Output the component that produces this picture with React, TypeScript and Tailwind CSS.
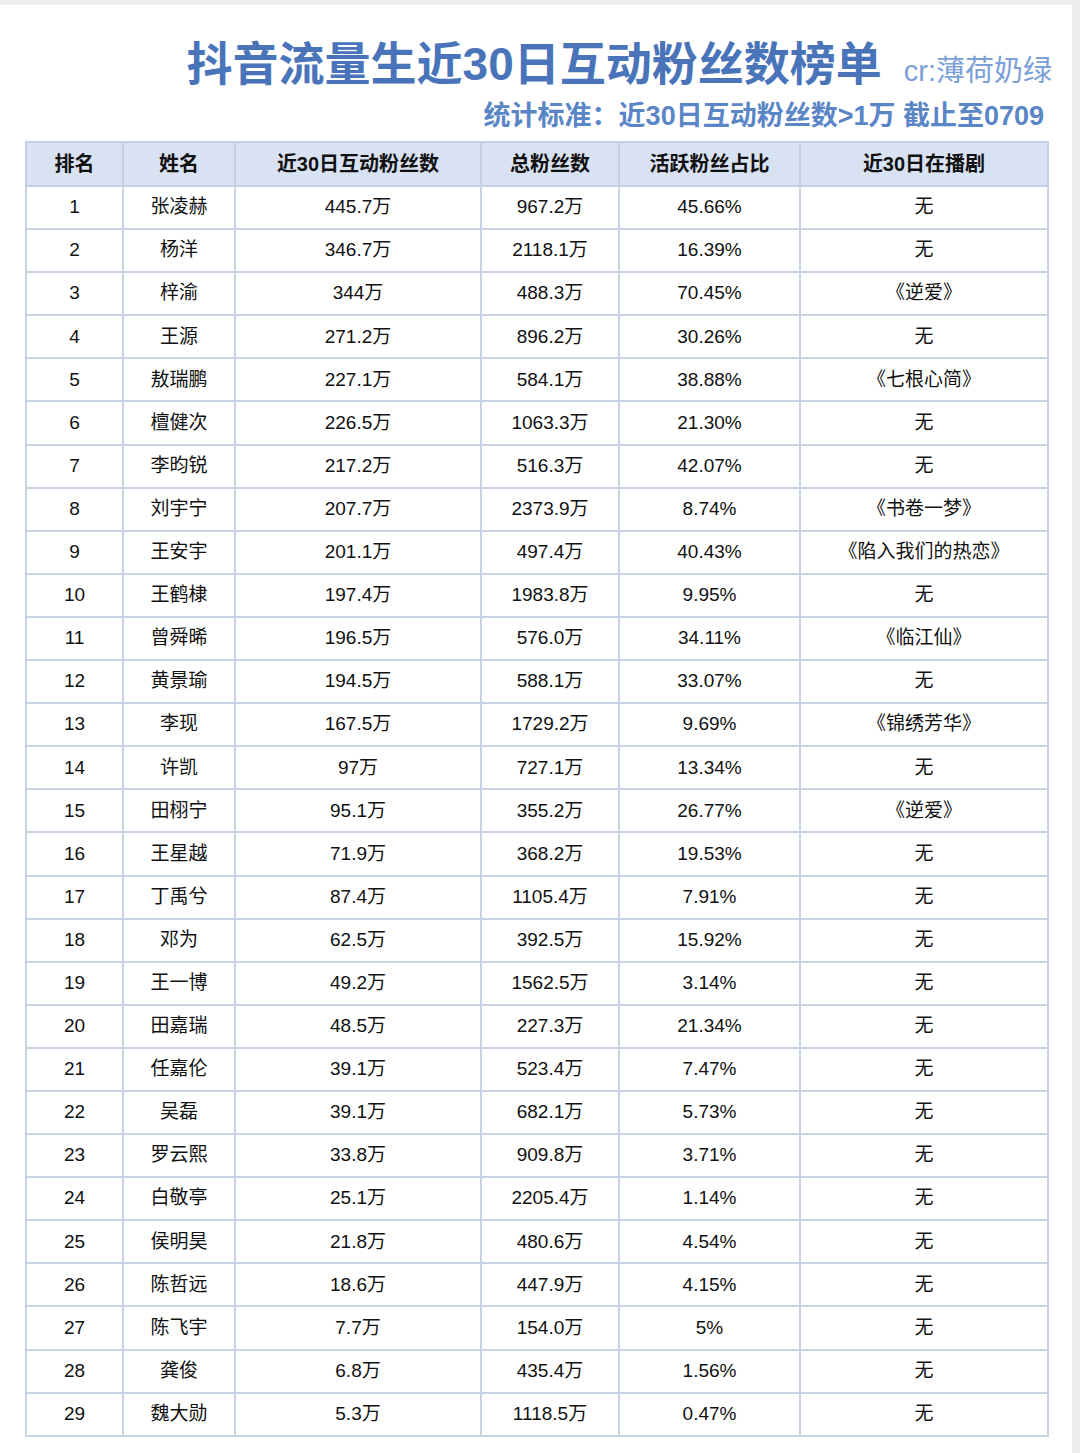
import React from "react";

const rows: [string, string, string, string, string, string][] = [
  ["1", "张凌赫", "445.7万", "967.2万", "45.66%", "无"],
  ["2", "杨洋", "346.7万", "2118.1万", "16.39%", "无"],
  ["3", "梓渝", "344万", "488.3万", "70.45%", "《逆爱》"],
  ["4", "王源", "271.2万", "896.2万", "30.26%", "无"],
  ["5", "敖瑞鹏", "227.1万", "584.1万", "38.88%", "《七根心简》"],
  ["6", "檀健次", "226.5万", "1063.3万", "21.30%", "无"],
  ["7", "李昀锐", "217.2万", "516.3万", "42.07%", "无"],
  ["8", "刘宇宁", "207.7万", "2373.9万", "8.74%", "《书卷一梦》"],
  ["9", "王安宇", "201.1万", "497.4万", "40.43%", "《陷入我们的热恋》"],
  ["10", "王鹤棣", "197.4万", "1983.8万", "9.95%", "无"],
  ["11", "曾舜晞", "196.5万", "576.0万", "34.11%", "《临江仙》"],
  ["12", "黄景瑜", "194.5万", "588.1万", "33.07%", "无"],
  ["13", "李现", "167.5万", "1729.2万", "9.69%", "《锦绣芳华》"],
  ["14", "许凯", "97万", "727.1万", "13.34%", "无"],
  ["15", "田栩宁", "95.1万", "355.2万", "26.77%", "《逆爱》"],
  ["16", "王星越", "71.9万", "368.2万", "19.53%", "无"],
  ["17", "丁禹兮", "87.4万", "1105.4万", "7.91%", "无"],
  ["18", "邓为", "62.5万", "392.5万", "15.92%", "无"],
  ["19", "王一博", "49.2万", "1562.5万", "3.14%", "无"],
  ["20", "田嘉瑞", "48.5万", "227.3万", "21.34%", "无"],
  ["21", "任嘉伦", "39.1万", "523.4万", "7.47%", "无"],
  ["22", "吴磊", "39.1万", "682.1万", "5.73%", "无"],
  ["23", "罗云熙", "33.8万", "909.8万", "3.71%", "无"],
  ["24", "白敬亭", "25.1万", "2205.4万", "1.14%", "无"],
  ["25", "侯明昊", "21.8万", "480.6万", "4.54%", "无"],
  ["26", "陈哲远", "18.6万", "447.9万", "4.15%", "无"],
  ["27", "陈飞宇", "7.7万", "154.0万", "5%", "无"],
  ["28", "龚俊", "6.8万", "435.4万", "1.56%", "无"],
  ["29", "魏大勋", "5.3万", "1118.5万", "0.47%", "无"],
];

const headers = ["排名", "姓名", "近30日互动粉丝数", "总粉丝数", "活跃粉丝占比", "近30日在播剧"];
const widths = ["w-[97px]", "w-[112px]", "w-[246px]", "w-[138px]", "w-[181px]", "w-[248px]"];

export default function App() {
  return (
    <div
      className="w-[1080px] h-[1453px] bg-[#ececec] pt-[5px] overflow-hidden"
      style={{ fontFamily: '"Liberation Sans", "Noto Sans CJK SC", sans-serif' }}
    >
      <div className="w-[1072px] h-[1448px] bg-white">
        <div className="flex items-end justify-end pr-[20px] pt-[30px] h-[85px]">
          <div className="text-[46px] leading-[52px] font-bold text-[#4a74ba]">
            抖音流量生近30日互动粉丝数榜单
          </div>
          <div className="ml-[22px] mb-[2px] text-[29px] leading-[34px] text-[#7ba0d8]">cr:薄荷奶绿</div>
        </div>
        <div className="flex justify-end pr-[28px] mt-[8px] h-[40px]">
          <div className="text-[27px] leading-[36px] font-bold text-[#5a85c6]">
            统计标准：近30日互动粉丝数&gt;1万 截止至0709
          </div>
        </div>
        <div className="pl-[25px] pt-[3px]">
          <table className="border-collapse border-2 border-[#6181b8] text-[19px] text-[#111]">
            <thead>
              <tr className="bg-[#d9e2f3] h-[44px]">
                {headers.map((h, i) => (
                  <th
                    key={i}
                    className={`${widths[i]} border-2 border-[#c3cfe4] font-bold text-[20px] text-[#111] text-center p-0`}
                  >
                    {h}
                  </th>
                ))}
              </tr>
            </thead>
            <tbody>
              {rows.map((r, ri) => (
                <tr key={ri} className="h-[43.1px]">
                  {r.map((c, ci) => (
                    <td key={ci} className="border-2 border-[#c8d3e6] text-center p-0">
                      {c}
                    </td>
                  ))}
                </tr>
              ))}
            </tbody>
          </table>
        </div>
      </div>
    </div>
  );
}
